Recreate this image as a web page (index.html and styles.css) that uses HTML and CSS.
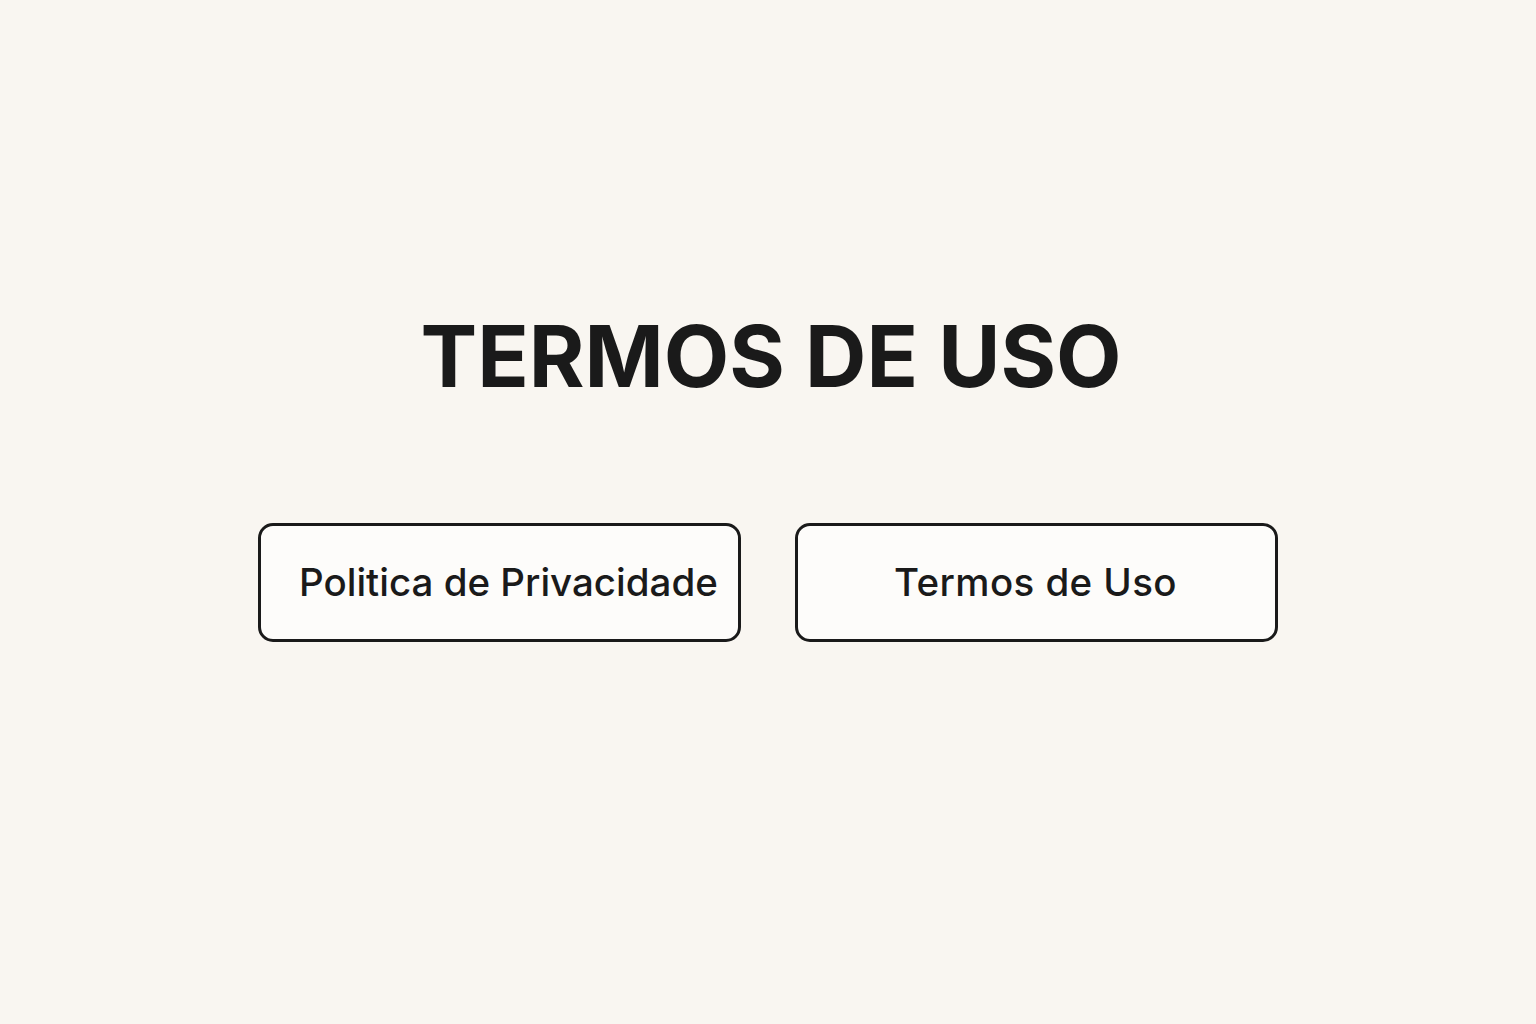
FILE: index.html
```html
<!DOCTYPE html>
<html lang="pt">
<head>
<meta charset="utf-8">
<title>Termos de Uso</title>
<link rel="stylesheet" href="styles.css">
</head>
<body>
<main class="page">
  <h1 class="title">TERMOS DE USO</h1>
  <div class="buttons">
    <a class="btn btn-left" href="#">Politica de Privacidade</a>
    <a class="btn btn-center" href="#">Termos de Uso</a>
  </div>
</main>
</body>
</html>
```
FILE: styles.css
```css
html, body {
  margin: 0;
  padding: 0;
  background: #f9f6f1;
}
body {
  font-family: Inter, "Liberation Sans", sans-serif;
  color: #1a1a1a;
}
.page {
  height: 1024px;
  display: flex;
  flex-direction: column;
  align-items: center;
  box-sizing: border-box;
  padding-top: 307px;
}
.title {
  margin: 0;
  padding-left: 6px;
  font-size: 85px;
  font-weight: 700;
  letter-spacing: 0;
  line-height: 100px;
  color: #1a1a1a;
}
.buttons {
  display: flex;
  gap: 54px;
  margin-top: 116px;
}
.btn {
  box-sizing: border-box;
  width: 483px;
  height: 119px;
  border: 3px solid #1a1a1a;
  border-radius: 15px;
  background: #fdfcfa;
  display: flex;
  align-items: center;
  text-decoration: none;
  color: #1a1a1a;
  font-size: 38.5px;
  font-weight: 500;
  padding-bottom: 2px;
}
.btn-left {
  padding-left: 38px;
  justify-content: flex-start;
}
.btn-center {
  justify-content: center;
  letter-spacing: 0.4px;
  padding-right: 2px;
}
```
